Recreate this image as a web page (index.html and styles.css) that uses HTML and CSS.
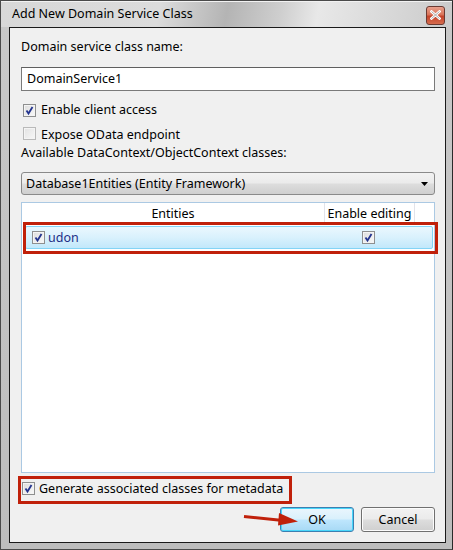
FILE: index.html
```html
<!DOCTYPE html>
<html>
<head>
<meta charset="utf-8">
<link rel="stylesheet" href="styles.css">
</head>
<body>
<div class="window">
  <div class="titlebar">
    <span class="title">Add New Domain Service Class</span>
    <span class="close">
      <svg width="11" height="10" viewBox="0 0 11 10"><path d="M1.5 1.5 L9.5 8.5 M9.5 1.5 L1.5 8.5" stroke="#fff" stroke-width="2.6" stroke-linecap="square"/><path d="M1.5 1.5 L9.5 8.5 M9.5 1.5 L1.5 8.5" stroke="#5a5a5a" stroke-width="1" opacity="0.5"/></svg>
    </span>
  </div>
  <div class="client">
    <div class="label first">Domain service class name:</div>
    <div class="textbox">DomainService1</div>
    <div class="check row1">
      <span class="cb"><svg width="13" height="13" viewBox="0 0 13 13"><path d="M3.5 6.5 L5.5 9.5 L9.5 3" stroke="#23348f" stroke-width="1.8" fill="none"/></svg></span>
      <span>Enable client access</span>
    </div>
    <div class="check row2 disabled">
      <span class="cb off"></span>
      <span>Expose OData endpoint</span>
    </div>
    <div class="label second">Available DataContext/ObjectContext classes:</div>
    <div class="combo">
      <span>Database1Entities (Entity Framework)</span>
      <svg width="7" height="4" viewBox="0 0 7 4"><path d="M0 0 H7 L3.5 4 Z" fill="#000"/></svg>
    </div>
    <div class="list">
      <div class="list-head">
        <div class="col1">Entities</div>
        <div class="col2">Enable editing</div>
        <div class="col3"></div>
      </div>
      <div class="list-row">
        <div class="cell1">
          <span class="cb"><svg width="13" height="13" viewBox="0 0 13 13"><path d="M3.5 6.5 L5.5 9.5 L9.5 3" stroke="#23348f" stroke-width="1.8" fill="none"/></svg></span>
          <span class="name">udon</span>
        </div>
        <div class="cell2">
          <span class="cb"><svg width="13" height="13" viewBox="0 0 13 13"><path d="M3.5 6.5 L5.5 9.5 L9.5 3" stroke="#23348f" stroke-width="1.8" fill="none"/></svg></span>
        </div>
      </div>
    </div>
    <div class="check meta">
      <span class="cb"><svg width="13" height="13" viewBox="0 0 13 13"><path d="M3.5 6.5 L5.5 9.5 L9.5 3" stroke="#23348f" stroke-width="1.8" fill="none"/></svg></span>
      <span>Generate associated classes for metadata</span>
    </div>
    <div class="buttons">
      <div class="btn ok">OK</div>
      <div class="btn">Cancel</div>
    </div>
  </div>
  <div class="mark mark-row"></div>
  <div class="mark mark-meta"></div>
  <svg class="arrow" width="56" height="14" viewBox="0 0 56 14"><path d="M1 4.5 L40 8.5" stroke="#c0200a" stroke-width="3"/><path d="M36 1 L55 9.5 L35 13.5 Z" fill="#c0200a"/></svg>
</div>
</body>
</html>
```
FILE: styles.css
```css
* { box-sizing: border-box; }
html, body { margin: 0; padding: 0; }
body { width: 453px; height: 550px; overflow: hidden; background: #808080; font-family: "Noto Sans", "Liberation Sans", Arial, sans-serif; font-size: 12.5px; line-height: 16px; color: #000; }

.window {
  position: relative;
  width: 453px; height: 550px;
  border: 1px solid #4a4a4a;
  border-right-color: #2a2a2a;
  background: linear-gradient(to bottom, #c9c9c9, #bdbdbd);
  display: flex; flex-direction: column;
  padding: 0 6px 6px 8px;
}
.titlebar {
  height: 26px;
  display: flex; align-items: center; justify-content: space-between;
  margin: 0 -6px 0 -8px;
  padding: 0 7px 2px 11px;
  background: linear-gradient(100deg, #d8d8d8 0%, #dcdcdc 35%, #b4b4b4 50%, #cfcfcf 62%, #e8e8e8 70%, #cacaca 100%);
  border-top: 1px solid #f2f2f2;
}
.title { font-size: 12.5px; color: #000; }
.close {
  width: 19px; height: 19px; margin-top: 3px;
  border: 1px solid #6b3a32;
  border-radius: 3px;
  background: linear-gradient(to bottom, #e9a08c 0%, #d97459 45%, #c4432a 55%, #d66c4e 100%);
  display: flex; align-items: center; justify-content: center;
}
.client {
  flex: 1;
  border: 1px solid #1a1a1a;
  background: #f0f0f0;
  padding: 0 10px 10px 11px;
  display: flex; flex-direction: column;
}
.label { height: 16px; line-height: 16px; white-space: nowrap; }
.label.first { margin-top: 11px; }
.textbox {
  margin-top: 12px;
  height: 24px;
  border: 1px solid #7a7a7a;
  border-top-color: #5f5f5f;
  background: #fff;
  padding-left: 5px;
  line-height: 22px;
}
.check { display: flex; align-items: center; gap: 5px; height: 16px; white-space: nowrap; }
.check.row1 { margin-top: 11px; padding-left: 2px; }
.check.row2 { margin-top: 8px; padding-left: 2px; height: 15px; align-items: flex-start; padding-top: 1px; }
.label.second { margin-top: 4px; }
.cb {
  width: 13px; height: 13px; flex: none;
  border: 1px solid #8e8f8f;
  background: linear-gradient(135deg, #dcdcdc, #fafafa);
  box-shadow: inset 0 0 0 1px #f4f4f4;
  display: inline-flex; align-items: center; justify-content: center;
  position: relative;
}
.cb svg { position: absolute; left: -1px; top: -1px; }
.cb.off { border-color: #b9b9b9; background: linear-gradient(135deg, #e2e2e2, #f7f7f7); }
.combo {
  margin-top: 11px;
  height: 23px;
  border: 1px solid #8a8a8a;
  border-radius: 3px;
  background: linear-gradient(to bottom, #f2f2f2 0%, #ebebeb 48%, #dddddd 52%, #cfcfcf 100%);
  display: flex; align-items: center; justify-content: space-between;
  padding: 0 6px 0 4px;
}
.list {
  margin-top: 7px;
  height: 271px;
  border: 1px solid #abc9e3;
  background: #fff;
  display: flex; flex-direction: column;
}
.list-head { display: flex; height: 19px; background: #fff; }
.list-head > div { border-right: 1px solid #e2e3ea; display: flex; align-items: flex-end; justify-content: center; line-height: 16px; white-space: nowrap; }
.col1 { width: 303px; }
.col2 { width: 90px; }
.col3 { width: 0; border-right: none !important; }
.list-row {
  margin: 4px 1px 0 3px;
  height: 23px;
  border: 1px solid #84d4f6;
  border-radius: 2px;
  background: linear-gradient(to bottom, #eaf7fe 0%, #d9f1fd 50%, #c2e8fb 100%);
  display: flex; align-items: center;
}
.cell1 { width: 336px; display: flex; align-items: center; gap: 3px; padding-left: 6px; }
.name { color: #1d2f87; }
.cell2 { display: flex; align-items: center; }
.check.meta { margin-top: 7px; padding-left: 1px; gap: 4px; height: 17px; }
.buttons { margin-top: 10px; display: flex; justify-content: flex-end; gap: 7px; }
.btn {
  width: 74px; height: 25px;
  border: 1px solid #707070;
  border-radius: 3px;
  background: linear-gradient(to bottom, #f2f2f2 0%, #ebebeb 48%, #dddddd 52%, #cfcfcf 100%);
  box-shadow: inset 0 0 0 1px #fcfcfc;
  display: flex; align-items: center; justify-content: center;
}
.btn.ok {
  border-color: #3c7fb1;
  background: linear-gradient(to bottom, #eaf6fd 0%, #d9f0fc 48%, #bee6fd 52%, #a7d9f5 100%);
  box-shadow: inset 0 0 0 1px #48d6fa;
}
.mark { position: absolute; border: 3px solid #c0200a; }
.mark-row { left: 22px; top: 221px; width: 415px; height: 32px; }
.mark-meta { left: 17px; top: 475px; width: 274px; height: 28px; }
.arrow { position: absolute; left: 242px; top: 511px; }
```
